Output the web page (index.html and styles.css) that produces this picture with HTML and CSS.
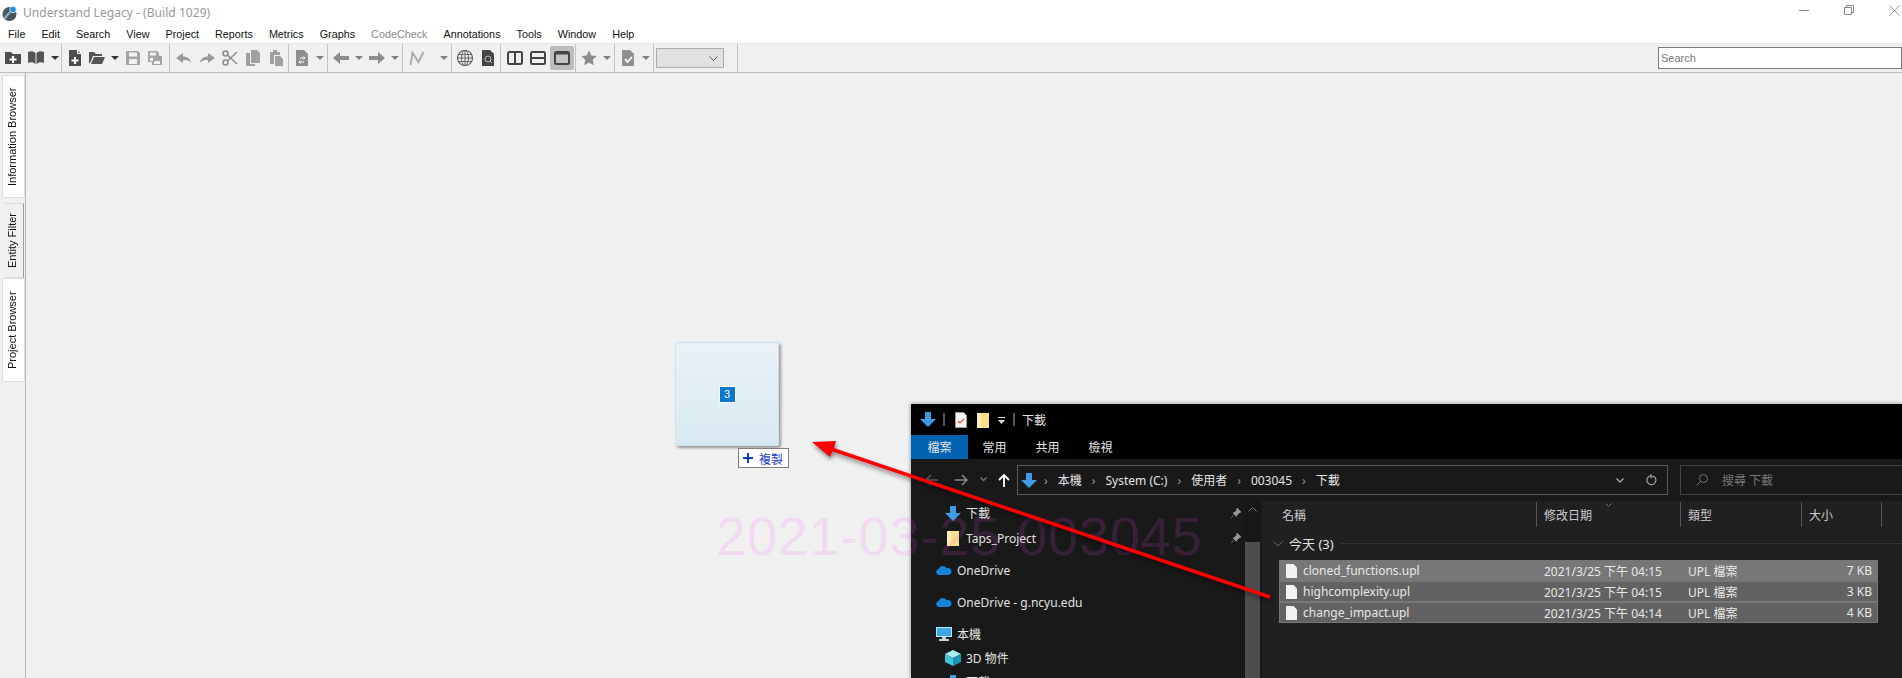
FILE: index.html
```html
<!DOCTYPE html>
<html lang="en">
<head>
    <meta charset="UTF-8">
    <meta name="viewport" content="width=device-width, initial-scale=1.0">
    <title>Understand Legacy</title>
    <link rel="stylesheet" href="styles.css">
</head>
<body>
<div class="app">
    <div class="titlebar">
        <svg class="app-icon" width="16" height="16" viewBox="0 0 16 16"><circle cx="7.500" cy="9" r="7" fill="#4a5560"/><path d="M2 14 8 7" stroke="#8fb3cc" stroke-width="2"/><circle cx="11" cy="4.500" r="3.200" fill="#1f8fe0" stroke="#bfe3fa"/></svg>
        <span class="app-title">Understand Legacy - (Build 1029)</span>
        <div class="win-controls">
            <svg width="10" height="10" viewBox="0 0 10 10"><path d="M0 5.500h10" stroke="#888"/></svg>
            <svg width="10" height="10" viewBox="0 0 10 10"><path d="M.5 2.500h7v7h-7zM2.500 2.500v-2h7v7h-2" fill="none" stroke="#888"/></svg>
            <svg width="11" height="11" viewBox="0 0 11 11"><path d="M.5.5l10 10M10.500.5l-10 10" stroke="#999"/></svg>
        </div>
    </div>

    <nav class="menubar">
        <span>File</span><span>Edit</span><span>Search</span><span>View</span><span>Project</span><span>Reports</span><span>Metrics</span><span>Graphs</span><span class="disabled">CodeCheck</span><span>Annotations</span><span>Tools</span><span>Window</span><span>Help</span>
    </nav>

    <div class="toolbar">
        <div class="tool-group w-project">
            <svg class="ic" viewBox="0 0 16 16"><path d="M0 2h6l2 2h8v10H0z" fill="#4d4d4d"/><path d="M7 6h2v2.500h2.500v2H9V13H7v-2.500H4.500v-2H7z" fill="#fff"/></svg>
            <svg class="ic" viewBox="0 0 16 16"><path d="M0 2c3-1 5-1 7.500 1v11C5 12 3 12 0 13zM16 2c-3-1-5-1-7.500 1v11c2.500-2 4.500-2 7.500-1z" fill="#555"/></svg>
            <svg class="drop" viewBox="0 0 8 4"><path d="M0 0h8L4 4z" fill="#333"/></svg>
        </div>
        <div class="tool-group w-file">
            <svg class="ic" viewBox="0 0 16 16"><path d="M2 0h8l4 4v12H2z" fill="#4d4d4d"/><path d="M10.500 0v3.500H14" fill="none" stroke="#fff"/><path d="M7 7h2v2.500h2.500v2H9V14H7v-2.500H4.500v-2H7z" fill="#fff"/></svg>
            <svg class="ic" viewBox="0 0 16 16"><path d="M0 2h5l2 2h6v2H4L1 13H0zM5 7h11l-3 7H2z" fill="#555"/></svg>
            <svg class="drop" viewBox="0 0 8 4"><path d="M0 0h8L4 4z" fill="#333"/></svg>
            <svg class="ic" viewBox="0 0 16 16"><path fill-rule="evenodd" d="M1 1h12l2 2v12H1zM4 2.500v4h8v-4zM4 9v5h8V9z" fill="#a5a5a5"/></svg>
            <svg class="ic" viewBox="0 0 16 16"><path fill-rule="evenodd" d="M1 1h9l2 2v3h3v9H5v-3H1zM3 2.500v3h6v-3zM3 8v3h3V7.500zM7 12v2h6v-3H8z" fill="#a5a5a5"/></svg>
        </div>
        <div class="tool-group w-edit">
            <svg class="ic" viewBox="0 0 16 16"><path d="M0 8l7-5v3.500c4 0 7 2 8.500 6.500-2-2.500-4.500-3-8.500-3V13z" fill="#999"/></svg>
            <svg class="ic" viewBox="0 0 16 16"><path d="M16 8L9 3v3.500C5 6.500 2 8.500.5 13c2-2.500 4.500-3 8.500-3V13z" fill="#999"/></svg>
            <svg class="ic" viewBox="0 0 16 16"><g fill="none" stroke="#8c8c8c" stroke-width="1.500"><circle cx="3.500" cy="3.500" r="2.500"/><circle cx="3.500" cy="12.500" r="2.500"/><path d="M5.500 5 15 14M5.500 11 15 2"/></g></svg>
            <svg class="ic" viewBox="0 0 16 16"><path d="M6 0h6l3 3v10H6zM1 3h4v11h5v2H1z" fill="#a0a0a0"/></svg>
            <svg class="ic" viewBox="0 0 16 16"><path d="M2 2h3V0h4v2h3v3H6v9H2zM7 6h5l3 3v7H7z" fill="#a0a0a0"/></svg>
        </div>
        <div class="tool-group w-sync">
            <svg class="ic" viewBox="0 0 16 16"><path d="M2 0h8l4 4v12H2z" fill="#8f8f8f"/><path d="M6 8h5M9.500 6.500 11 8 9.500 9.500M10 12H5M6.500 10.500 5 12l1.500 1.500" fill="none" stroke="#fff"/></svg>
            <svg class="drop" viewBox="0 0 8 4"><path d="M0 0h8L4 4z" fill="#808080"/></svg>
        </div>
        <div class="tool-group w-history">
            <svg class="ic" viewBox="0 0 16 16"><path d="M0 8l7-6v4h9v4H7v4z" fill="#8c8c8c"/></svg>
            <svg class="drop" viewBox="0 0 8 4"><path d="M0 0h8L4 4z" fill="#808080"/></svg>
            <svg class="ic" viewBox="0 0 16 16"><path d="M16 8L9 2v4H0v4h9v4z" fill="#8c8c8c"/></svg>
            <svg class="drop" viewBox="0 0 8 4"><path d="M0 0h8L4 4z" fill="#808080"/></svg>
        </div>
        <div class="tool-group w-metric">
            <svg class="ic" viewBox="0 0 16 16"><path d="M1.500 15 3.500 3l6 9 5-10" fill="none" stroke="#adadad" stroke-width="2"/></svg>
            <svg class="drop" viewBox="0 0 8 4"><path d="M0 0h8L4 4z" fill="#808080"/></svg>
        </div>
        <div class="tool-group w-browse">
            <svg class="ic" viewBox="0 0 16 16"><g fill="none" stroke="#666"><circle cx="8" cy="8" r="7.500" stroke-width="1.200"/><ellipse cx="8" cy="8" rx="3.500" ry="7.500"/><path d="M8 .5v15M.5 8h15M1.500 4.500h13M1.500 11.500h13"/></g></svg>
            <svg class="ic" viewBox="0 0 16 16"><path d="M2 0h8l4 4v12H2z" fill="#444"/><circle cx="8" cy="9" r="3" fill="none" stroke="#bbb"/><path d="M10 11l2 2" stroke="#bbb"/></svg>
        </div>
        <div class="tool-group w-layout">
            <svg class="ic" viewBox="0 0 16 16"><rect x="1" y="2" width="14" height="12" rx="1.500" fill="none" stroke="#444" stroke-width="2"/><path d="M8 2v12" stroke="#444" stroke-width="2"/></svg>
            <svg class="ic" viewBox="0 0 16 16"><rect x="1" y="2" width="14" height="12" rx="1.500" fill="none" stroke="#444" stroke-width="2"/><path d="M1 8h14" stroke="#444" stroke-width="2"/></svg>
            <span class="tool-on"><svg class="ic" viewBox="0 0 16 16"><rect x="1" y="2" width="14" height="12" rx="1.500" fill="#c4c4c4" stroke="#444" stroke-width="2"/><path d="M1 3.500h14" stroke="#444" stroke-width="2"/></svg></span>
        </div>
        <div class="tool-group w-fav">
            <svg class="ic" viewBox="0 0 16 16"><path d="M8 .5l2.300 5 5.400.6-4 3.700 1.100 5.400L8 12.500l-4.800 2.700 1.100-5.400-4-3.700 5.400-.6z" fill="#8c8c8c"/></svg>
            <svg class="drop" viewBox="0 0 8 4"><path d="M0 0h8L4 4z" fill="#808080"/></svg>
        </div>
        <div class="tool-group w-check">
            <svg class="ic" viewBox="0 0 16 16"><path d="M2 0h8l4 4v12H2z" fill="#8f8f8f"/><path d="M5 9l2.500 3L12 7" fill="none" stroke="#fff" stroke-width="1.800"/></svg>
            <svg class="drop" viewBox="0 0 8 4"><path d="M0 0h8L4 4z" fill="#808080"/></svg>
        </div>
        <div class="tool-group w-combo">
            <div class="combo"><svg width="9" height="5" viewBox="0 0 9 5"><path d="M.5.5l4 4 4-4" fill="none" stroke="#555"/></svg></div>
        </div>
        <input class="search" type="text" placeholder="Search">
    </div>

    <div class="workspace">
        <div class="rail">
            <div class="rail-tab tab-info">Information Browser</div>
            <div class="rail-tab tab-filter">Entity Filter</div>
            <div class="rail-tab tab-project">Project Browser</div>
        </div>
        <div class="canvas"></div>
    </div>
</div>

<!-- dragged files ghost -->
<div class="drag-tile"><span class="drag-count">3</span></div>
<div class="drag-label"><svg width="10" height="10" viewBox="0 0 10 10"><path d="M4 0h2v4h4v2H6v4H4V6H0V4h4z" fill="#0b3fc4"/></svg><span>複製</span></div>

<div class="explorer">
    <div class="ex-title">
        <svg width="16" height="15" viewBox="0 0 16 15"><path d="M5 0h6v7h5l-8 8-8-8h5z" fill="#3f9be8"/></svg>
        <i class="ex-sep"></i>
        <svg class="ex-doc" width="12" height="16" viewBox="0 0 12 16"><path d="M.5.5h8l3 3v12H.5z" fill="#f4f4f4" stroke="#999"/><path d="M3 9l2 2 4-4" fill="none" stroke="#e0592a" stroke-width="1.200"/></svg>
        <svg class="ex-folder" width="12" height="16" viewBox="0 0 12 16"><path d="M0 1h12v15H0z" fill="#fbe08a"/><path d="M0 1h4v15H0z" fill="#fdeeb5"/></svg>
        <svg class="ex-qat" width="7" height="7" viewBox="0 0 7 7"><path d="M0 0h7v1H0zM0 3h7L3.500 7z" fill="#ddd"/></svg>
        <i class="ex-sep"></i>
        <span class="ex-name">下載</span>
    </div>
    <div class="ex-tabs">
        <span class="ex-tab active">檔案</span><span class="ex-tab">常用</span><span class="ex-tab">共用</span><span class="ex-tab">檢視</span>
    </div>
    <div class="ex-nav">
        <svg class="nav-back" width="13" height="12" viewBox="0 0 13 12"><path d="M6 1 1 6l5 5M1 6h12" fill="none" stroke="#5c5c5c" stroke-width="1.500"/></svg>
        <svg class="nav-fwd" width="13" height="12" viewBox="0 0 13 12"><path d="M7 1l5 5-5 5M12 6H0" fill="none" stroke="#8c8c8c" stroke-width="1.500"/></svg>
        <svg class="nav-drop" width="7" height="5" viewBox="0 0 7 5"><path d="M.5.5l3 3 3-3" fill="none" stroke="#777" stroke-width="1.300"/></svg>
        <svg class="nav-up" width="12" height="13" viewBox="0 0 12 13"><path d="M1 6l5-5 5 5M6 1v12" fill="none" stroke="#fff" stroke-width="1.800"/></svg>
        <div class="address">
            <svg width="16" height="15" viewBox="0 0 16 15"><path d="M5 0h6v7h5l-8 8-8-8h5z" fill="#3f9be8"/></svg>
            <div class="crumbs">
                <span class="chev">›</span><span>本機</span><span class="chev">›</span><span>System (C:)</span><span class="chev">›</span><span>使用者</span><span class="chev">›</span><span>003045</span><span class="chev">›</span><span>下載</span>
            </div>
            <svg class="addr-drop" width="8" height="5" viewBox="0 0 8 5"><path d="M.5.5l3.500 3.500L7.500.5" fill="none" stroke="#aaa" stroke-width="1.300"/></svg>
            <svg class="addr-refresh" width="11" height="12" viewBox="0 0 11 12"><path d="M8 2.500a4.500 4.500 0 1 1-3-.8M5 0v3.500L8 2" fill="none" stroke="#999" stroke-width="1.300"/></svg>
        </div>
        <div class="ex-search">
            <svg width="12" height="12" viewBox="0 0 12 12"><circle cx="7.500" cy="4.500" r="4" fill="none" stroke="#777"/><path d="M4.500 7.500 .5 11.500" stroke="#777"/></svg>
            <span>搜尋 下載</span>
        </div>
    </div>
    <div class="ex-body">
        <aside class="ex-side">
            <div class="tree-row lvl2 r-dl"><svg width="16" height="15" viewBox="0 0 16 15"><path d="M5 0h6v7h5l-8 8-8-8h5z" fill="#3f9be8"/></svg><span>下載</span><svg class="pin" width="10" height="10" viewBox="0 0 10 10"><path d="M6 0l4 4-2 1-2 2-.5 1.500L2 5l1.500-.5 2-2zM3 7 0 10" fill="#999" stroke="#999" stroke-width=".6"/></svg></div>
            <div class="tree-row lvl2 r-taps"><svg width="16" height="16" viewBox="0 0 16 16"><path d="M2 1h12v15H2z" fill="#fbe08a"/><path d="M2 1h4v15H2z" fill="#fdeeb5"/></svg><span>Taps_Project</span><svg class="pin" width="10" height="10" viewBox="0 0 10 10"><path d="M6 0l4 4-2 1-2 2-.5 1.500L2 5l1.500-.5 2-2zM3 7 0 10" fill="#999" stroke="#999" stroke-width=".6"/></svg></div>
            <div class="tree-row lvl1 r-od"><svg width="16" height="10" viewBox="0 0 16 10"><path d="M3 10a3 3 0 0 1-.5-5.900A4.500 4.500 0 0 1 10.500 3 3.500 3.500 0 0 1 13 10z" fill="#1583d8"/></svg><span>OneDrive</span></div>
            <div class="tree-row lvl1 r-od2"><svg width="16" height="10" viewBox="0 0 16 10"><path d="M3 10a3 3 0 0 1-.5-5.900A4.500 4.500 0 0 1 10.500 3 3.500 3.500 0 0 1 13 10z" fill="#1583d8"/></svg><span>OneDrive - g.ncyu.edu</span></div>
            <div class="tree-row lvl1 r-pc"><svg width="16" height="14" viewBox="0 0 16 14"><path d="M0 0h16v10H0z" fill="#bfe6f7"/><path d="M1 1h14v8H1z" fill="#3aa7e6"/><path d="M6 10h4v2H6zM3 12h10v2H3z" fill="#c4d3dc"/></svg><span>本機</span></div>
            <div class="tree-row lvl2 r-3d"><svg width="16" height="16" viewBox="0 0 16 16"><path d="M8 0l8 4-8 4-8-4z" fill="#a8eef5"/><path d="M0 4l8 4v8l-8-4z" fill="#3fc4d8"/><path d="M16 4l-8 4v8l8-4z" fill="#1c95b5"/></svg><span>3D 物件</span></div>
            <div class="tree-row lvl2"><svg width="16" height="15" viewBox="0 0 16 15"><path d="M5 0h6v7h5l-8 8-8-8h5z" fill="#3f9be8"/></svg><span>下載</span></div>
        </aside>
        <div class="ex-scroll">
            <svg width="9" height="5" viewBox="0 0 9 5"><path d="M.5 4.500l4-4 4 4" fill="none" stroke="#777"/></svg>
            <div class="ex-thumb"></div>
        </div>
        <main class="ex-main">
            <div class="col-head">
                <span class="c-name">名稱</span>
                <span class="c-date">修改日期<svg width="7" height="4" viewBox="0 0 7 4"><path d="M.5.5l3 3 3-3" fill="none" stroke="#777"/></svg></span>
                <span class="c-type">類型</span>
                <span class="c-size">大小</span>
            </div>
            <div class="group-head">
                <svg width="10" height="6" viewBox="0 0 10 6"><path d="M.5.5l4.500 4.500L9.500.5" fill="none" stroke="#666"/></svg>
                <span>今天 (3)</span><i></i>
            </div>
            <div class="file-list">
                <div class="file-row hot"><svg width="11" height="14" viewBox="0 0 11 14"><path d="M0 0h7.500L11 3.500V14H0z" fill="#f2f2f2"/></svg><span>cloned_functions.upl</span><span class="stamp">2021/3/25 下午 04:15</span><span>UPL 檔案</span><span class="size">7 KB</span></div>
                <div class="file-row"><svg width="11" height="14" viewBox="0 0 11 14"><path d="M0 0h7.500L11 3.500V14H0z" fill="#f2f2f2"/></svg><span>highcomplexity.upl</span><span class="stamp">2021/3/25 下午 04:15</span><span>UPL 檔案</span><span class="size">3 KB</span></div>
                <div class="file-row"><svg width="11" height="14" viewBox="0 0 11 14"><path d="M0 0h7.500L11 3.500V14H0z" fill="#f2f2f2"/></svg><span>change_impact.upl</span><span class="stamp">2021/3/25 下午 04:14</span><span>UPL 檔案</span><span class="size">4 KB</span></div>
            </div>
        </main>
    </div>
</div>

<div class="watermark">2021-03-25 003045</div>

<svg class="red-arrow" width="1902" height="678" viewBox="0 0 1902 678"><path d="M1270 597 828 448" fill="none" stroke="#f00" stroke-width="3.500"/><path d="M812 442l24-1-2 7-4 9z" fill="#f00"/></svg>
</body>
</html>
```

FILE: styles.css
```css
* {
    box-sizing: border-box;
}
html, body {
    margin: 0;
    height: 678px;
    overflow: hidden;
}
body {
    position: relative;
    font-family: "Liberation Sans", Arial, sans-serif;
    font-size: 11px;
    color: #111;
    background-color: #f0f0f0;
}
svg {
    flex: none;
    display: block;
}
.app {
    height: 678px;
    display: flex;
    flex-direction: column;
}

/* window title */
.titlebar {
    height: 25px;
    background-color: #fff;
    display: flex;
    align-items: center;
    padding-left: 2px;
}
.app-title {
    margin-left: 5px;
    font-family: "Noto Sans", sans-serif;
    font-size: 12.1px;
    color: #999;
}
.win-controls {
    margin-left: auto;
    display: flex;
    align-items: center;
    gap: 35px;
    padding-right: 2px;
    margin-top: -5px;
}

/* menu */
.menubar {
    height: 18px;
    background-color: #fff;
    display: flex;
    align-items: center;
    gap: 16px;
    padding-left: 8px;
    font-size: 10.8px;
}
.menubar .disabled {
    color: #8a8a8a;
}

/* toolbar */
.toolbar {
    height: 30px;
    background-color: #f0f0f0;
    border-top: 1px solid #e8e8e8;
    border-bottom: 1px solid #bdbdbd;
    display: flex;
    align-items: stretch;
}
.tool-group {
    display: flex;
    align-items: center;
    gap: 6px;
    padding-left: 5px;
    border-right: 1px solid #c4c4c4;
}
.ic {
    width: 16px;
    height: 16px;
}
.drop {
    width: 8px;
    height: 4px;
}
.w-project { width: 62px; gap: 7px; }
.w-file { width: 108px; }
.w-edit { width: 119px; padding-left: 6px; gap: 7px; }
.w-sync { width: 39px; }
.w-history { width: 75px; }
.w-metric { width: 49px; padding-left: 6px; gap: 15px; }
.w-browse { width: 49px; padding-left: 5px; gap: 7px; }
.w-layout { width: 75px; padding-left: 6px; gap: 7px; }
.w-fav { width: 39px; }
.w-check { width: 39px; }
.w-combo { width: 84px; padding-left: 2px; }
.tool-on {
    width: 24px;
    height: 24px;
    background-color: #bdbdbd;
    border-radius: 2px;
    display: flex;
    align-items: center;
    justify-content: center;
    margin-left: -3px;
}
.combo {
    width: 68px;
    height: 20px;
    background-color: #e1e1e1;
    border: 1px solid #adadad;
    display: flex;
    align-items: center;
    justify-content: flex-end;
    padding-right: 5px;
}
.search {
    margin: 3px 0 3px auto;
    width: 244px;
    height: 22px;
    border: 1px solid #7a7a7a;
    background-color: #fff;
    padding: 0 2px;
    font-family: "Liberation Sans", Arial, sans-serif;
    font-size: 11px;
}
.search::placeholder {
    color: #777;
}

/* left rail */
.workspace {
    flex: 1;
    display: flex;
}
.rail {
    width: 26px;
    border-right: 1px solid #b8b8b8;
    display: flex;
    flex-direction: column;
    padding-top: 2px;
}
.rail-tab {
    writing-mode: vertical-rl;
    transform: rotate(180deg);
    display: flex;
    align-items: center;
    justify-content: center;
    padding-left: 3px;
    font-size: 11px;
}
.tab-info, .tab-project {
    width: 23px;
    margin-left: 2px;
    background-color: #fff;
    border: 1px solid #dedede;
}
.tab-info {
    height: 123px;
    margin-bottom: 5px;
}
.tab-filter {
    width: 20px;
    height: 75px;
    margin-left: 4px;
    background-color: #f0f0f0;
    border-left: 1px solid #999;
    border-top: 1px solid #ddd;
    border-bottom: 1px solid #ddd;
}
.tab-project {
    height: 104px;
}
.canvas {
    flex: 1;
}

/* drag ghost */
.drag-tile {
    position: absolute;
    left: 675px;
    top: 342px;
    width: 104px;
    height: 104px;
    background: linear-gradient(#e9f1f6, #d9e9f2);
    border: 1px solid #c8e4f3;
    border-radius: 2px;
    box-shadow: 2px 2px 3px #999;
    display: flex;
    align-items: center;
    justify-content: center;
}
.drag-count {
    width: 17px;
    height: 17px;
    background-color: #0a78cc;
    border: 1px solid #fff;
    color: #fff;
    font-size: 11px;
    line-height: 15px;
    text-align: center;
}
.drag-label {
    position: absolute;
    left: 738px;
    top: 448px;
    width: 51px;
    height: 20px;
    background-color: #fff;
    border: 1px solid #808080;
    display: flex;
    align-items: center;
    gap: 6px;
    padding-left: 4px;
    font-family: "Noto Sans CJK TC", sans-serif;
    font-size: 12px;
    color: #2a3fc8;
}

/* explorer window */
.explorer {
    position: absolute;
    left: 911px;
    top: 404px;
    right: 0;
    bottom: 0;
    background-color: #191919;
    box-shadow: 0 0 4px #888;
    overflow: hidden;
    display: flex;
    flex-direction: column;
    font-family: "Noto Sans", "Noto Sans CJK TC", sans-serif;
    font-size: 12px;
    color: #e4e4e4;
}
.ex-title {
    height: 31px;
    background-color: #000;
    display: flex;
    align-items: center;
    padding-left: 9px;
}
.ex-sep {
    width: 2px;
    height: 13px;
    margin: 0 7px;
    background-color: #555;
}
.ex-doc {
    margin-left: 3px;
}
.ex-folder {
    margin-left: 10px;
}
.ex-qat {
    margin: 2px 1px 0 9px;
}
.ex-tabs {
    height: 24px;
    background-color: #000;
    display: flex;
}
.ex-tab {
    width: 53px;
    display: flex;
    align-items: center;
    justify-content: center;
}
.ex-tab.active {
    width: 57px;
    background-color: #0063b1;
}
.ex-nav {
    height: 42px;
    padding-top: 6px;
    background-color: #191919;
    display: flex;
    align-items: flex-start;
}
.nav-back {
    margin: 9px 0 0 14px;
}
.nav-fwd {
    margin: 9px 0 0 17px;
}
.nav-drop {
    margin: 12px 0 0 12px;
}
.nav-up {
    margin: 9px 0 0 11px;
}
.address {
    flex: none;
    margin-left: 7px;
    width: 651px;
    height: 30px;
    border: 1px solid #5a5a5a;
    display: flex;
    align-items: center;
    padding-left: 3px;
}
.crumbs {
    display: flex;
    align-items: center;
    gap: 10px;
    margin-left: 7px;
}
.chev {
    color: #999;
}
.addr-drop {
    margin-left: auto;
}
.addr-refresh {
    margin: 0 10px 0 22px;
}
.ex-search {
    flex: none;
    margin-left: 12px;
    width: 300px;
    height: 30px;
    border: 1px solid #444;
    display: flex;
    align-items: center;
    gap: 14px;
    padding-left: 15px;
    color: #777;
}
.ex-body {
    flex: 1;
    display: flex;
    min-height: 0;
}
.ex-side {
    width: 334px;
    background-color: #191919;
}
.tree-row {
    height: 24px;
    display: flex;
    align-items: center;
    gap: 5px;
    position: relative;
}
.lvl1 {
    padding-left: 25px;
}
.lvl2 {
    padding-left: 34px;
}
.pin {
    position: absolute;
    left: 320px;
    top: 7px;
}
.r-taps { margin-top: 1px; }
.r-od { margin-top: 8px; }
.r-od2 { margin-top: 8px; }
.r-pc { margin-top: 8px; }
.ex-scroll {
    width: 15px;
    background-color: #171717;
    display: flex;
    flex-direction: column;
    align-items: center;
    padding-top: 6px;
}
.ex-thumb {
    margin-top: 30px;
    width: 15px;
    flex: 1;
    background-color: #4d4d4d;
}
.ex-main {
    flex: 1;
    margin-left: 2px;
    background-color: #202020;
    padding-top: 1px;
}
.col-head {
    height: 25px;
    display: grid;
    grid-template-columns: 275px 144px 121px 80px;
}
.col-head span {
    border-right: 1px solid #555;
    display: flex;
    align-items: center;
    padding-left: 7px;
    position: relative;
    color: #ccc;
}
.col-head .c-name {
    padding-left: 20px;
}
.c-date svg {
    position: absolute;
    left: 68px;
    top: 1px;
}
.group-head {
    height: 33px;
    display: flex;
    align-items: center;
    gap: 6px;
    padding-left: 11px;
    font-size: 13px;
    color: #e4e4e4;
}
.group-head i {
    flex: 1;
    height: 1px;
    background-color: #333;
}
.file-list {
    margin-left: 17px;
    width: 599px;
}
.file-row {
    height: 21px;
    background-color: #626262;
    border: 1px solid #777;
    display: grid;
    grid-template-columns: 23px 241px 144px 120px 64px;
    align-items: center;
    padding-right: 5px;
    color: #e8e8e8;
}
.file-row svg {
    margin-left: 6px;
}
.file-row.hot {
    background-color: #777;
}
.file-row .stamp {
    white-space: nowrap;
}
.file-row .size {
    text-align: right;
}

.watermark {
    position: absolute;
    left: 716px;
    top: 506px;
    font-size: 54px;
    letter-spacing: 0.9px;
    line-height: 61px;
    color: rgba(255, 80, 255, 0.14);
    white-space: nowrap;
    pointer-events: none;
}
.red-arrow {
    position: absolute;
    left: 0;
    top: 0;
    pointer-events: none;
    filter: drop-shadow(1px 3px 2px rgba(0, 0, 0, 0.45));
}
```
